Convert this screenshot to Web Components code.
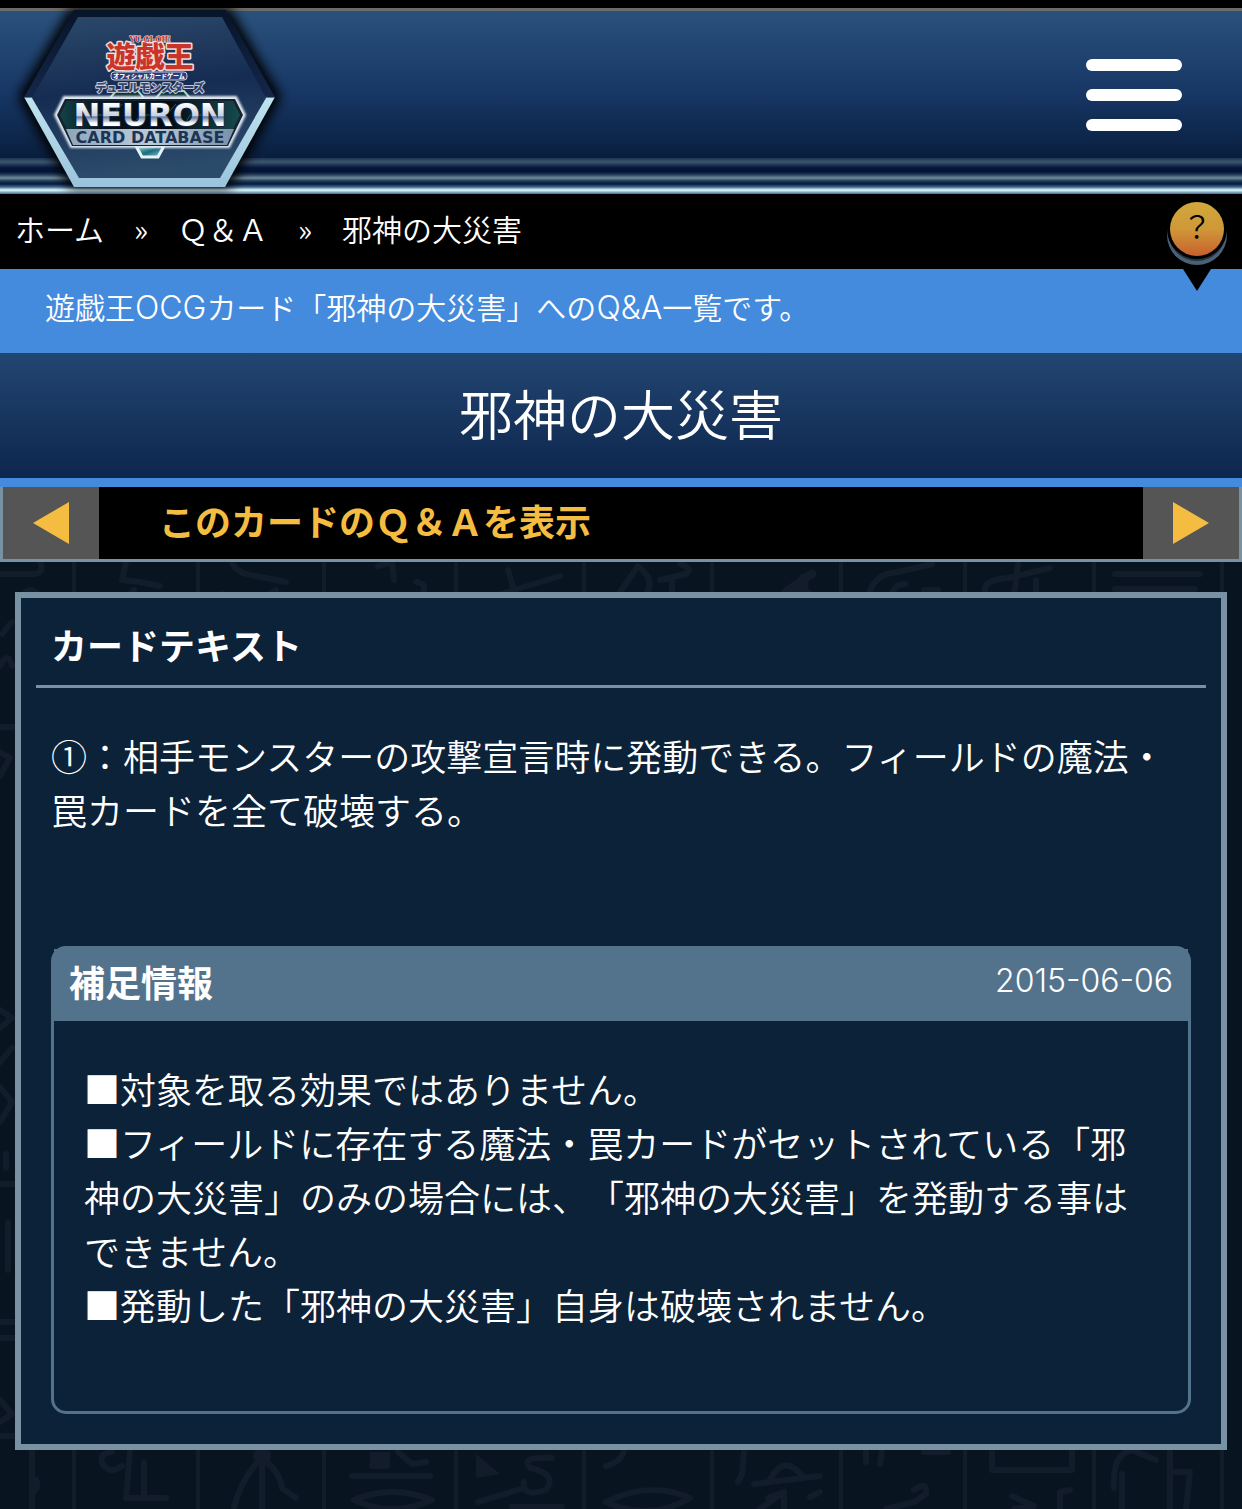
<!DOCTYPE html>
<html lang="ja">
<head>
<meta charset="utf-8">
<meta name="viewport" content="width=device-width, initial-scale=1">
<title>邪神の大災害 | Q&amp;A</title>
<style>
  body {
    margin: 0;
    background: #081521;
    color: #fff;
    font-family: "Noto Sans CJK JP", sans-serif;
    font-weight: 350;
    font-size: 36px;
    line-height: 54px;
    text-spacing-trim: space-all;
  }
</style>
</head>
<body>
  <site-header></site-header>
  <bread-crumb>
    <crumb-item href="#home">ホーム</crumb-item>
    <crumb-item href="#qa">Ｑ＆Ａ</crumb-item>
    <crumb-item>邪神の大災害</crumb-item>
  </bread-crumb>
  <page-title>
    <span slot="lead">遊戯王<latin-text>OCG</latin-text>カード「邪神の大災害」への<latin-text>Q&amp;A</latin-text>一覧です。</span>
    邪神の大災害
  </page-title>
  <tab-switcher>このカードのＱ＆Ａを表示</tab-switcher>
  <glyph-wall>
    <card-panel>
      <span slot="title">カードテキスト</span>
      ①：相手モンスターの攻撃宣言時に発動できる。フィールドの魔法・罠カードを全て破壊する。
      <info-box slot="extra" date="2015-06-06">
        <span slot="title">補足情報</span>
        ■対象を取る効果ではありません。<br>■フィールドに存在する魔法・罠カードがセットされている「邪神の大災害」のみの場合には、「邪神の大災害」を発動する事はできません。<br>■発動した「邪神の大災害」自身は破壊されません。
      </info-box>
    </card-panel>
  </glyph-wall>

<script>
function define(name, html) {
  customElements.define(name, class extends HTMLElement {
    constructor() {
      super();
      this.attachShadow({ mode: 'open' }).innerHTML =
        typeof html === 'function' ? html(this) : html;
    }
  });
}

// no whitespace round the slot, it would show up between the characters
define('latin-text', /*html*/`<style>
    :host {
      font-family: Inter, "Liberation Sans", sans-serif;
      font-size: 32px;
      font-weight: 300;
      line-height: 1;
    }
  </style><slot></slot>`);

define('neuron-logo', /*html*/`
  <style>
    :host { display: block; }
    a, svg { display: block; }
    .jp { font-family: "Noto Sans CJK JP", sans-serif; font-weight: 900; }
    .en { font-family: "DejaVu Sans", sans-serif; font-weight: bold; }
    text { text-anchor: middle; paint-order: stroke; stroke-linejoin: round; }
  </style>
  <a href="#top" aria-label="NEURON CARD DATABASE">
    <svg width="300" height="186" viewBox="0 8 300 186">
      <defs>
        <filter id="glow" x="-20%" y="-20%" width="140%" height="140%">
          <feGaussianBlur stdDeviation="6"/>
        </filter>
        <filter id="halo" x="-20%" y="-20%" width="140%" height="140%">
          <feGaussianBlur stdDeviation="1"/>
        </filter>
        <linearGradient id="face" x1="0" y1="0" x2="0.15" y2="1">
          <stop offset="0" stop-color="#2b496a"/>
          <stop offset=".5" stop-color="#162c52"/>
          <stop offset="1" stop-color="#2b4b6b"/>
        </linearGradient>
        <linearGradient id="rim" x1="0" y1="0" x2="0" y2="1">
          <stop offset="0" stop-color="#071429"/>
          <stop offset=".49" stop-color="#14264a"/>
          <stop offset=".5" stop-color="#bfe3ef"/>
          <stop offset="1" stop-color="#9ac3dc"/>
        </linearGradient>
        <linearGradient id="plate" x1="0" y1="0" x2="1" y2="0">
          <stop offset="0" stop-color="#124448"/>
          <stop offset=".2" stop-color="#07151f"/>
          <stop offset=".6" stop-color="#030a12"/>
          <stop offset="1" stop-color="#154a4d"/>
        </linearGradient>
        <linearGradient id="steel" x1="0" y1="0" x2="1" y2="0">
          <stop offset="0" stop-color="#8fa5bf"/>
          <stop offset=".5" stop-color="#bccbd9"/>
          <stop offset="1" stop-color="#7890ac"/>
        </linearGradient>
        <linearGradient id="chrome" x1="0" y1="0" x2="0" y2="1">
          <stop offset=".2" stop-color="#ffffff"/>
          <stop offset=".52" stop-color="#c5cfdf"/>
          <stop offset=".55" stop-color="#60789f"/>
          <stop offset=".72" stop-color="#ffffff"/>
        </linearGradient>
        <linearGradient id="gem" x1="0" y1="0" x2="1" y2="1">
          <stop offset="0" stop-color="#7fe0b0"/>
          <stop offset=".5" stop-color="#1d6a80"/>
          <stop offset="1" stop-color="#8fd0e8"/>
        </linearGradient>
      </defs>
      <path d="M18 97 70 8H230L281 97 230 188H70Z" fill="#000" filter="url(#glow)"/>
      <path d="M24 97 74 10H226L275 97 225 187H74Z" fill="url(#rim)"/>
      <path d="M32 98 78 17H222L266 98 220 178H79Z" fill="url(#face)"/>
      <path d="M110 98 116 91H138L144 98M156 98 162 91H184L190 98" fill="#0d3438" stroke="#a9d5c9" stroke-width="2"/>
      <path d="M136 146 142 157H158L164 146Z" fill="url(#gem)" stroke="#e4f4fa" stroke-width="3"/>
      <path d="M64 97H236L245 115 229 147H71L55 115Z" fill="#dfe9f2" stroke="#dfe9f2" stroke-width="2" filter="url(#halo)"/>
      <path d="M65 99H235L243 115 228 146H72L57 115Z" fill="#16232f"/>
      <path d="M67 101H233L240 115 233 129H67L60 115Z" fill="url(#plate)"/>
      <path d="M88 115H112L122 104M132 126 140 115H166L176 104M184 126 190 115H212" fill="none" stroke="#1d5a61" stroke-width="1"/>
      <path d="M66 129H234L227 145H73Z" fill="url(#steel)"/>
      <text class="en" x="150" y="126" font-size="32" fill="url(#chrome)" stroke="#16243c" stroke-width="2">NEURON</text>
      <text class="en" x="150" y="143" font-size="16" fill="#1c3554">CARD DATABASE</text>
      <text class="jp" x="150" y="68" font-size="29" fill="#cb3529" stroke="#f2dedb" stroke-width="3">遊戯王</text>
      <text x="150" y="42" font-size="8" font-family="Liberation Serif, serif" font-weight="bold" fill="#c9302b" stroke="#f3e8e6" stroke-width="1">YU-GI-OH!</text>
      <rect x="111" y="72" width="76" height="8" rx="3" fill="#2e3d78" stroke="#c9cfe2"/>
      <text class="jp" x="149" y="78" font-size="6" fill="#fff">オフィシャルカードゲーム</text>
      <text class="jp" x="150" y="92" font-size="11" fill="#33456f" stroke="#c3c8d6" stroke-width="2">デュエルモンスターズ</text>
    </svg>
  </a>
`);

define('menu-button', /*html*/`
  <style>
    :host { display: block; }
    button {
      display: grid;
      gap: 18px;
      width: 96px;
      padding: 0;
      border: 0;
      background: none;
      cursor: pointer;
    }
    i { height: 12px; border-radius: 6px; background: #fff; }
  </style>
  <button type="button" aria-label="メニュー"><i></i><i></i><i></i></button>
`);

define('site-header', /*html*/`
  <style>
    :host { display: block; }
    header {
      display: flex;
      justify-content: space-between;
      border-top: 8px solid #000;
      background:
        linear-gradient(#6b6b68, #6b6b68) top / 100% 3px no-repeat,
        linear-gradient(#1b3453, #3d566f 4px, #14294a 8px, #05153a 10px, #05153a 14px,
          #2b4560 17px, #728c9a 20px, #1c3858 23px, #07193a 26px, #3f6a8e 29px,
          #e2fbff 32px, #8fb4cc 34px, #3d6b96 36px) bottom / 100% 36px no-repeat,
        linear-gradient(#2b527d, #173765 45%, #091f3f 80%);
    }
    menu-button { margin: 51px 60px 0 0; }
  </style>
  <header>
    <neuron-logo></neuron-logo>
    <menu-button></menu-button>
  </header>
`);

define('crumb-item', el => /*html*/`
  <style>
    :host { display: flex; }
    :host(:not(:first-child))::before {
      content: '»';
      width: 74px;
      text-align: center;
    }
    a { color: inherit; text-decoration: none; }
  </style>
  ${el.hasAttribute('href') ? `<a href="${el.getAttribute('href')}"><slot></slot></a>` : '<slot></slot>'}
`);

define('help-badge', /*html*/`
  <style>
    :host { display: block; }
    button {
      display: block;
      padding: 0;
      border: 0;
      background: none;
      cursor: pointer;
    }
    svg { display: block; }
    text { font: 350 30px "Noto Sans CJK JP", sans-serif; text-anchor: middle; }
  </style>
  <button type="button" aria-label="ヘルプ">
    <svg width="60" height="94" viewBox="0 0 60 94">
      <defs>
        <linearGradient id="gold" x1="0" y1="0" x2="0" y2="1">
          <stop offset="0" stop-color="#d0a83c"/>
          <stop offset=".5" stop-color="#cf9838"/>
          <stop offset="1" stop-color="#c8602c"/>
        </linearGradient>
      </defs>
      <path d="M16 71H44L30 93Z"/>
      <circle cx="30" cy="37" r="30" fill="#4a6074"/>
      <circle cx="30" cy="34" r="29" fill="#26323e"/>
      <circle cx="30" cy="31" r="30"/>
      <circle cx="30" cy="31" r="27" fill="url(#gold)"/>
      <text x="30" y="40">？</text>
    </svg>
  </button>
`);

define('bread-crumb', /*html*/`
  <style>
    :host { display: block; position: relative; background: #000; }
    nav {
      display: flex;
      padding: 0 15px 6px;
      font-size: 30px;
      line-height: 69px;
    }
    /* the pointer hangs over the blue bar below */
    help-badge { position: absolute; top: 4px; right: 15px; z-index: 1; }
  </style>
  <nav><slot></slot></nav>
  <help-badge></help-badge>
`);

define('page-title', /*html*/`
  <style>
    :host { display: block; border-bottom: 9px solid #448bde; }
    p {
      margin: 0;
      padding: 12px 45px 22px;
      background: #448bde;
      font-size: 30px;
      line-height: 50px;
    }
    h1 {
      margin: 0;
      padding-bottom: 6px;
      background: linear-gradient(#224672, #0d264d);
      font-size: 54px;
      font-weight: inherit;
      line-height: 119px;
      text-align: center;
    }
  </style>
  <p><slot name="lead"></slot></p>
  <h1><slot></slot></h1>
`);

define('tab-switcher', /*html*/`
  <style>
    :host {
      display: flex;
      border: solid #7992a3;
      border-width: 0 3px 3px;
      background: #000;
    }
    button {
      display: grid;
      place-items: center;
      width: 96px;
      padding: 0;
      border: 0;
      background: #555;
      cursor: pointer;
    }
    a {
      flex: 1;
      padding: 0 60px 6px;
      color: #f5bc42;
      font-weight: 700;
      line-height: 66px;
      text-decoration: none;
    }
  </style>
  <button type="button" aria-label="前へ">
    <svg width="36" height="42"><path d="M36 0V42L0 21Z" fill="#f5bc42"/></svg>
  </button>
  <a href="#qa"><slot></slot></a>
  <button type="button" aria-label="次へ">
    <svg width="36" height="42"><path d="M0 0V42L36 21Z" fill="#f5bc42"/></svg>
  </button>
`);

define('glyph-wall', /*html*/`
  <style>
    :host { display: block; position: relative; padding: 30px 15px 59px; }
    svg { position: absolute; inset: 0; width: 100%; height: 100%; }
    .content { position: relative; }
  </style>
  <svg viewBox="0 0 1242 947" preserveAspectRatio="xMinYMin slice" aria-hidden="true">
    <g fill="none" stroke="#121c2a" stroke-width="6" stroke-linecap="round" stroke-linejoin="round">
      <!-- column rules -->
      <path stroke-width="4" d="M74 0V947M198 0V947M324 0V947M456 0V947M584 0V947M712 0V947M841 0V947M965 0V947M1094 0V947M1222 0V947"/>
      <!-- top row -->
      <path d="M0 12H36Q44 10 40 0M24 32Q30 24 38 32M126 0 122 18 140 20 160 24M128 34 134 28M232 0Q236 12 256 14L286 20M222 32 232 36M262 36 276 28M378 4 392 0 394 18M416 20Q430 22 420 36M508 8 514 28 560 14M494 34 514 28M616 36 638 4Q656 18 646 32M660 18 686 12Q694 6 680 2M672 18V36"/>
      <path stroke-width="9" d="M802 18 812 12M804 18 786 30 808 32M804 16V36"/>
      <path d="M868 36Q872 12 898 10L932 2M892 36Q892 22 906 22M924 28H938M986 32Q980 18 1008 16L1050 6M1018 2 1014 34M1036 18V32M1115 12H1200M1115 27H1195"/>
      <!-- left edge -->
      <path d="M2 72 12 60M0 104Q8 88 12 104M0 165H14M0 190 10 196 0 214M0 448 12 456 0 466M0 500 12 486M0 525 12 540 0 560M6 592V606M0 622H14M8 660V708M0 760H14M0 776H14M0 838 12 852 0 860M0 874H14"/>
      <!-- bottom row -->
      <path d="M32 888V947M32 930Q40 926 36 918M112 890Q96 892 104 904 112 912 122 904M130 888 126 936 166 936M144 900V936M262 892V947M258 900Q242 916 234 945M266 900Q280 910 282 926L296 936M352 914H430M372 904H386M398 890 412 902 426 900M354 938Q392 922 432 938 392 956 354 938M552 896Q520 894 530 906 558 912 546 928 522 936 524 920M478 940 524 926M512 945H562"/>
      <path d="M606 940Q650 918 690 936 650 960 606 940M624 888Q622 900 606 904M744 890 742 912 738 920M754 922 820 914M770 918Q784 890 804 916M768 936 784 930 760 947M784 930V947M810 935 820 930M866 890V900M882 888 880 902M924 890H948M914 928Q928 918 926 932L914 940 886 947M992 890V908H1072V888M1012 934 1034 944 1014 947M1060 947V930L1070 928M1114 926Q1112 892 1132 888L1156 898M1122 912V947M1170 890V947M1170 910H1190L1186 947"/>
    </g>
    <g fill="#121c2a">
      <circle cx="262" cy="894" r="9"/>
      <path d="M476 892 500 912 476 916ZM370 890H390V906H370Z"/>
    </g>
  </svg>
  <div class="content"><slot></slot></div>
`);

define('card-panel', /*html*/`
  <style>
    :host {
      display: block;
      padding: 0 15px 30px;
      border: 6px solid #7992a3;
      background: #0c2238;
    }
    h2 {
      margin: 0;
      padding: 19px 15px 14px;
      border-bottom: 3px solid #7992a3;
      font-size: 36px;
      font-weight: 700;
    }
    .text { padding: 40px 15px 110px; }
    .extra { padding: 0 15px; }
  </style>
  <h2><slot name="title"></slot></h2>
  <div class="text"><slot></slot></div>
  <div class="extra"><slot name="extra"></slot></div>
`);

define('info-box', el => /*html*/`
  <style>
    :host {
      display: block;
      border: 3px solid #53738d;
      border-radius: 15px;
    }
    .head {
      display: flex;
      justify-content: space-between;
      padding: 5px 15px 13px;
      background: #53738d;
    }
    h3 {
      margin: 0;
      font-size: 36px;
      font-weight: 700;
    }
    time { font-size: 30px; line-height: 50px; }
    .body { padding: 40px 30px 80px; }
  </style>
  <div class="head">
    <h3><slot name="title"></slot></h3>
    <time><latin-text>${el.getAttribute('date')}</latin-text></time>
  </div>
  <div class="body"><slot></slot></div>
`);
</script>
</body>
</html>
